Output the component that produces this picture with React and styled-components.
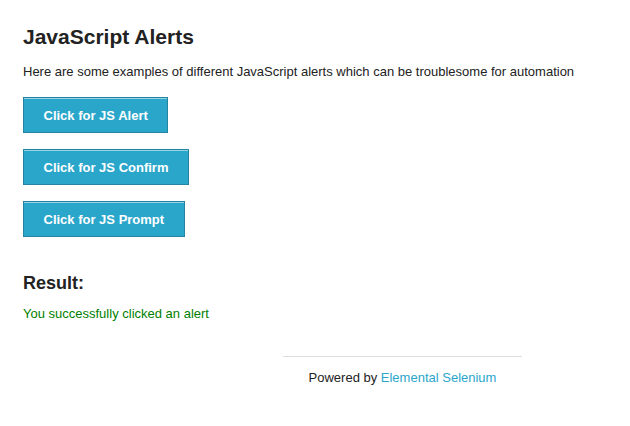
import React from "react";
import styled, { createGlobalStyle } from "styled-components";

const GlobalStyle = createGlobalStyle`
  html, body {
    margin: 0;
    padding: 0;
    background: #ffffff;
  }
  body {
    font-family: "Liberation Sans", Arial, Helvetica, sans-serif;
    color: #222222;
  }
`;

const Page = styled.div`
  padding: 23px 0 0 23px;
`;

const Title = styled.h3`
  margin: 0 0 14px;
  font-size: 21px;
  line-height: 27px;
  font-weight: bold;
  color: #222222;
`;

const Intro = styled.p`
  margin: 0 0 17px;
  font-size: 13px;
  line-height: 16px;
`;

const ButtonList = styled.ul`
  list-style: none;
  margin: 0;
  padding: 0;
  display: flex;
  flex-direction: column;
  align-items: flex-start;
  gap: 16px;
`;

const Button = styled.button`
  box-sizing: border-box;
  height: 36px;
  padding: 0 19.5px;
  background: #2ba6cb;
  border: 1px solid #2284a1;
  box-shadow: inset 0 1px 0 rgba(255, 255, 255, 0.5);
  color: #ffffff;
  font-family: "Liberation Sans", Arial, sans-serif;
  font-size: 13px;
  font-weight: bold;
  cursor: pointer;
`;

const ResultTitle = styled.h4`
  margin: 35px 0 11px;
  font-size: 18px;
  line-height: 23px;
  font-weight: bold;
`;

const ResultText = styled.p`
  margin: 0;
  font-size: 13px;
  line-height: 16px;
  color: #008000;
`;

const Footer = styled.footer`
  margin: 34px 0 0 260px;
  width: 239px;
  border-top: 1px solid #dddddd;
  padding-top: 13px;
  text-align: center;
  font-size: 13px;
  line-height: 16px;
`;

const Link = styled.a`
  color: #2ba6cb;
  text-decoration: none;
`;

export default function App() {
  return (
    <>
      <GlobalStyle />
      <Page>
        <Title>JavaScript Alerts</Title>
        <Intro>
          Here are some examples of different JavaScript alerts which can be
          troublesome for automation
        </Intro>
        <ButtonList>
          <li>
            <Button>Click for JS Alert</Button>
          </li>
          <li>
            <Button>Click for JS Confirm</Button>
          </li>
          <li>
            <Button>Click for JS Prompt</Button>
          </li>
        </ButtonList>
        <ResultTitle>Result:</ResultTitle>
        <ResultText>You successfully clicked an alert</ResultText>
        <Footer>
          Powered by <Link href="#">Elemental Selenium</Link>
        </Footer>
      </Page>
    </>
  );
}
